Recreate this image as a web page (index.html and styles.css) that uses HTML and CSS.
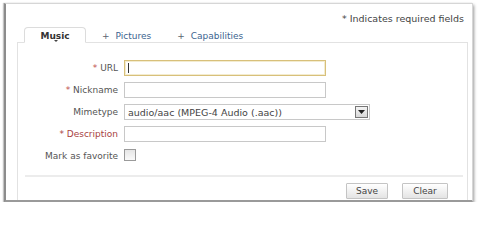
FILE: index.html
```html
<!DOCTYPE html>
<html>
<head>
<meta charset="utf-8">
<link rel="stylesheet" href="styles.css">
</head>
<body>
<div class="frame">
  <div class="note">* Indicates required fields</div>
  <div class="tabs">
    <div class="tab active">Music<span class="caret"></span></div>
    <div class="tab link"><span class="plus">+</span>Pictures</div>
    <div class="tab link"><span class="plus">+</span>Capabilities</div>
  </div>
  <div class="panel">
    <div class="form">
      <div class="row">
        <label class="lbl"><span class="req">*</span> URL</label>
        <div class="input focus"><span class="cursor"></span></div>
      </div>
      <div class="row">
        <label class="lbl"><span class="req">*</span> Nickname</label>
        <div class="input"></div>
      </div>
      <div class="row">
        <label class="lbl">Mimetype</label>
        <div class="select"><span class="val">audio/aac (MPEG-4 Audio (.aac))</span><span class="dd"><svg width="7" height="4" viewBox="0 0 7 4"><path d="M0 0h7L3.5 4z" fill="#222"/></svg></span></div>
      </div>
      <div class="row">
        <label class="lbl redlbl">* Description</label>
        <div class="input"></div>
      </div>
      <div class="row">
        <label class="lbl">Mark as favorite</label>
        <div class="check"></div>
      </div>
    </div>
    <div class="sep"></div>
    <div class="actions">
      <button class="btn save">Save</button>
      <button class="btn clear">Clear</button>
    </div>
  </div>
</div>
</body>
</html>
```
FILE: styles.css
```css
html, body {
  margin: 0;
  padding: 0;
  background: #fff;
}
body {
  font-family: "DejaVu Sans", Verdana, sans-serif;
  font-size: 9px;
  color: #555;
}
.frame {
  margin: 3px 0 0 4px;
  width: 466px;
  height: 196px;
  border: 1px solid #d6d6d6;
  border-left: 2px solid #8c8c8c;
  border-bottom: 2px solid #9a9a9a;
  box-shadow: 1px 2px 3px #999, -1px 0 1px #ccc;
  background: #fff;
  display: flex;
  flex-direction: column;
}
.note {
  text-align: right;
  padding: 9px 8px 0 0;
  height: 14px;
  line-height: 12px;
  color: #444;
  font-size: 9.5px;
}
.tabs {
  display: flex;
  margin-left: 18px;
  height: 15px;
  position: relative;
  z-index: 2;
}
.tab {
  position: relative;
  height: 15px;
  line-height: 18px;
  box-sizing: border-box;
}
.tab.active {
  width: 62px;
  border: 1px solid #dcdcdc;
  border-bottom: 1px solid #fff;
  border-radius: 4px 4px 0 0;
  background: #fff;
  text-align: center;
  font-weight: bold;
  color: #333;
  line-height: 16px;
  height: 16px;
}
.caret {
  position: absolute;
  left: 29px;
  top: 12px;
  width: 0;
  height: 0;
  border-left: 2px solid transparent;
  border-right: 2px solid transparent;
  border-top: 2px solid #444;
}
.tab.link {
  color: #3c6490;
  margin-left: 16px;
}
.tab.link + .tab.link {
  margin-left: 26px;
}
.plus {
  margin-right: 6px;
  color: #5a6470;
}
.panel {
  flex: 1;
  margin: 0 4px 0 11px;
  border: 1px solid #e2e2e2;
  border-bottom: none;
  display: flex;
  flex-direction: column;
}
.form {
  display: grid;
  grid-template-columns: 100px auto;
  grid-auto-rows: 22px;
  column-gap: 6px;
  padding-top: 17px;
}
.row {
  display: contents;
}
.lbl {
  text-align: right;
  line-height: 16px;
  color: #555;
}
.req {
  color: #c0504d;
}
.redlbl {
  color: #a8423f;
}
.input {
  width: 200px;
  height: 14px;
  border: 1px solid #c8c8c8;
  box-sizing: content-box;
  position: relative;
}
.input.focus {
  border-color: #d8c07a;
  box-shadow: inset 0 0 0 1px #f3ecd0;
}
.cursor {
  position: absolute;
  left: 3px;
  top: 2px;
  width: 1px;
  height: 10px;
  background: #333;
}
.select {
  width: 244px;
  height: 14px;
  border: 1px solid #c8c8c8;
  display: flex;
  justify-content: space-between;
  align-items: center;
}
.val {
  padding-left: 3px;
  color: #444;
  font-size: 9.5px;
}
.dd {
  width: 13px;
  height: 12px;
  border: 1px solid #777;
  margin-right: 1px;
  background: linear-gradient(#f4f4f4, #d8d8d8);
  display: flex;
  align-items: center;
  justify-content: center;
  box-sizing: border-box;
}
.check {
  width: 10px;
  height: 10px;
  border: 1px solid #9a9a9a;
  background: linear-gradient(#e6e6e6, #fafafa);
  margin-top: 1px;
}
.sep {
  margin: 5px 4px 0 7px;
  border-top: 2px solid #ececec;
}
.actions {
  display: flex;
  justify-content: flex-end;
  gap: 14px;
  padding: 6px 19px 0 0;
}
.btn {
  font-family: "DejaVu Sans", Verdana, sans-serif;
  font-size: 9px;
  color: #444;
  height: 16px;
  padding: 0;
  border: 1px solid #c4c4c4;
  background: linear-gradient(#ffffff, #e4e4e4);
  border-radius: 1px;
}
.save { width: 42px; }
.clear { width: 46px; }
```
